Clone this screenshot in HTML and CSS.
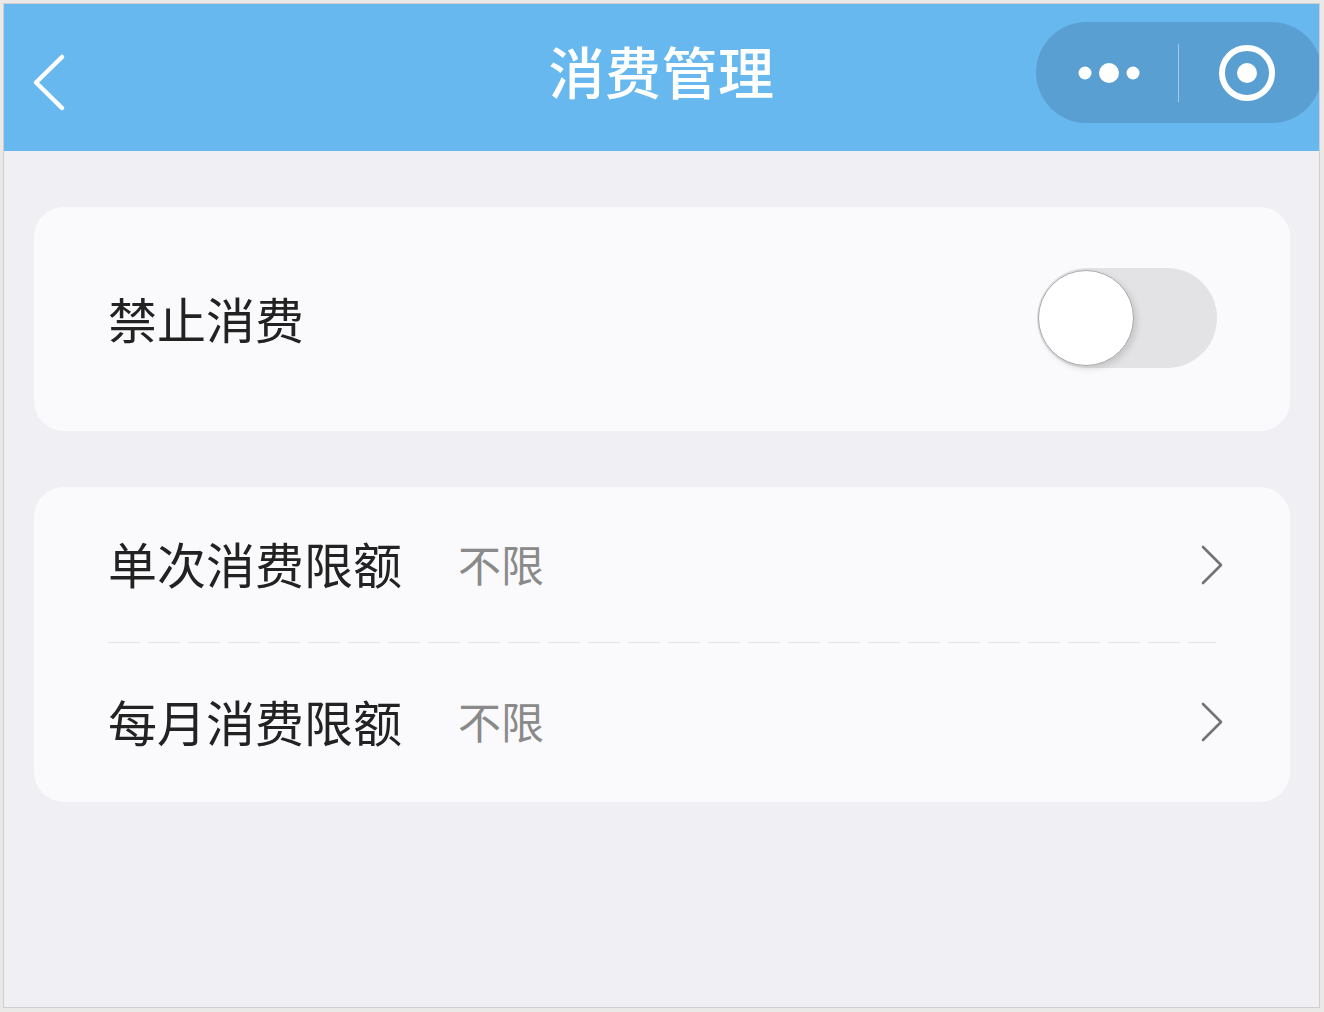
FILE: index.html
```html
<!DOCTYPE html>
<html lang="zh-CN">
<head>
<meta charset="utf-8">
<title>消费管理</title>
<link rel="stylesheet" href="styles.css">
</head>
<body>
<div class="frame">
  <header class="nav">
    <div class="nav-left">
      <svg class="back" width="40" height="60" viewBox="0 0 40 60">
        <polyline points="30,4 4,29.5 30,55" fill="none" stroke="#fff" stroke-width="4.5" stroke-linecap="round" stroke-linejoin="round"/>
      </svg>
    </div>
    <h1 class="title">消费管理</h1>
    <div class="nav-right">
      <div class="capsule">
        <div class="cap-more">
          <svg width="64" height="24" viewBox="0 0 64 24">
            <circle cx="8" cy="12" r="6.5" fill="#fff"/>
            <circle cx="32" cy="12" r="10" fill="#fff"/>
            <circle cx="56" cy="12" r="6.5" fill="#fff"/>
          </svg>
        </div>
        <div class="cap-sep"></div>
        <div class="cap-close">
          <svg width="60" height="60" viewBox="0 0 60 60">
            <circle cx="30" cy="30" r="25" fill="none" stroke="#fff" stroke-width="6"/>
            <circle cx="30" cy="30" r="10" fill="#fff"/>
          </svg>
        </div>
      </div>
    </div>
  </header>

  <main class="content">
    <section class="card card-switch">
      <span class="label">禁止消费</span>
      <div class="toggle">
        <div class="knob"></div>
      </div>
    </section>

    <section class="card card-list">
      <div class="row">
        <span class="label">单次消费限额</span>
        <span class="value">不限</span>
        <svg class="arrow" width="24" height="40" viewBox="0 0 24 40">
          <polyline points="3,2 21,20 3,38" fill="none" stroke="#737373" stroke-width="2.6" stroke-linecap="round" stroke-linejoin="round"/>
        </svg>
      </div>
      <div class="divider"></div>
      <div class="row row-last">
        <span class="label">每月消费限额</span>
        <span class="value">不限</span>
        <svg class="arrow" width="24" height="40" viewBox="0 0 24 40">
          <polyline points="3,2 21,20 3,38" fill="none" stroke="#737373" stroke-width="2.6" stroke-linecap="round" stroke-linejoin="round"/>
        </svg>
      </div>
    </section>
  </main>
</div>
</body>
</html>
```

FILE: styles.css
```css
html, body {
  margin: 0;
  padding: 0;
}

body {
  background: #ebe8e8;
  font-family: "Noto Sans CJK SC", "Noto Sans", sans-serif;
  width: 1324px;
  height: 1012px;
  overflow: hidden;
}

.frame {
  margin: 3px 0 0 3px;
  width: 1317px;
  height: 1005px;
  border: 1px solid #cfcfcf;
  box-sizing: border-box;
  background: #f0eff4;
  overflow: hidden;
}

.nav {
  height: 147px;
  background: #67b8ee;
  display: grid;
  grid-template-columns: 1fr auto 1fr;
  align-items: start;
  padding-top: 18px;
  box-sizing: border-box;
  overflow: hidden;
}

.nav-left {
  padding-left: 28px;
  padding-top: 31px;
}

.back {
  display: block;
}

.title {
  margin: 0;
  height: 101px;
  line-height: 101px;
  font-size: 56px;
  font-weight: 500;
  color: #ffffff;
  letter-spacing: 0.5px;
  margin-top: -3px;
}

.nav-right {
  display: flex;
  justify-content: flex-end;
}

.capsule {
  width: 286px;
  height: 101px;
  border-radius: 51px;
  background: #5a9fd2;
  margin-right: -3px;
  display: flex;
  align-items: center;
}

.cap-more {
  width: 142px;
  display: flex;
  justify-content: center;
  padding-left: 3px;
  box-sizing: border-box;
}

.cap-more svg,
.cap-close svg {
  display: block;
}

.cap-sep {
  width: 1px;
  height: 58px;
  background: rgba(255, 255, 255, 0.45);
}

.cap-close {
  flex: 1;
  display: flex;
  justify-content: center;
  padding-right: 7px;
  box-sizing: border-box;
}

.content {
  padding: 56px 29px 0 30px;
  display: flex;
  flex-direction: column;
  gap: 56px;
}

.card {
  background: #fafafc;
  border-radius: 30px;
}

.label {
  font-size: 49px;
  color: #222222;
  line-height: 1;
  margin-top: -4px;
}

.card-switch {
  height: 224px;
  display: flex;
  align-items: center;
  justify-content: space-between;
  padding: 0 73px 0 74px;
  box-sizing: border-box;
}

.toggle {
  width: 180px;
  height: 100px;
  border-radius: 50px;
  background: #e3e2e5;
  position: relative;
  margin-top: -2px;
}

.knob {
  position: absolute;
  left: 1px;
  top: 2px;
  width: 96px;
  height: 96px;
  border-radius: 50%;
  background: #ffffff;
  box-sizing: border-box;
  border: 1px solid #a9a9ab;
  box-shadow: 3px 3px 6px rgba(0, 0, 0, 0.12);
}

.card-list {
  display: flex;
  flex-direction: column;
  height: 315px;
}

.row {
  height: 155px;
  display: flex;
  align-items: center;
  padding: 0 66px 0 74px;
}

.row-last {
  height: 158px;
}

.row .value {
  font-size: 43px;
  color: #8a8a8a;
  margin-left: 56px;
  flex: 1;
  line-height: 1;
  margin-top: -3px;
}

.row .arrow {
  display: block;
}

.divider {
  height: 1px;
  margin: 0 74px 0 74px;
  background: repeating-linear-gradient(90deg, #e2e2e7 0 32px, transparent 32px 40px);
}
```
